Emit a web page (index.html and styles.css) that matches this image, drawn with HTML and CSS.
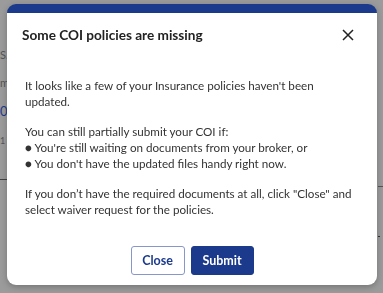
FILE: index.html
```
<html>
	<head>
		<link rel="stylesheet" href="styles.css">
	</head>
	<body>
		<div class="page">
			<div class="pageRow first">S.</div>
			<div class="pageRow">m</div>
			<div class="pageRow blue">0</div>
			<div class="pageRow small">1</div>
			<div class="pageRule"></div>
		</div>
		<div class="pageSide">
			<div class="sideRule"></div>
			<div class="sideDash"></div>
		</div>

		<div class="overlay">
			<div class="modal">
				<div class="modalHeader">
					<div class="modalTitle">Some COI policies are missing</div>
					<div class="closeIcon">
						<svg width="12" height="12" viewBox="0 0 12 12">
							<path d="M1 1 L11 11 M11 1 L1 11" stroke="#222" stroke-width="1.5" fill="none"/>
						</svg>
					</div>
				</div>
				<div class="modalBody">
					<p>It looks like a few of your Insurance policies haven't been updated.</p>
					<p>You can still partially submit your COI if:<br>
					&#9679; You're still waiting on documents from your broker, or<br>
					&#9679; You don't have the updated files handy right now.</p>
					<p>If you don’t have the required documents at all, click "Close" and select waiver request for the policies.</p>
				</div>
				<div class="modalFooter">
					<div class="btn btnOutline">Close</div>
					<div class="btn btnPrimary">Submit</div>
				</div>
			</div>
		</div>
	</body>
</html>
```

FILE: styles.css
```
html, body {
	margin: 0;
	padding: 0;
	width: 100%;
	height: 100%;
	background: #9b9b9b;
	font-family: Lato, "Noto Sans", sans-serif;
	overflow: hidden;
}

.page {
	width: 7px;
	color: #555;
	font-size: 11px;
	overflow: hidden;
}

.pageRow {
	height: 16px;
	line-height: 16px;
	margin-bottom: 12px;
}

.pageRow.first {
	margin-top: 47px;
}

.pageRow.blue {
	color: #1b3a8c;
	font-size: 13px;
}

.pageRow.small {
	margin-top: 14px;
	font-size: 9px;
}

.pageRule {
	margin-top: 30px;
	height: 1px;
	background: #444;
}

.pageSide {
	position: absolute;
	top: 0;
	right: 0;
	width: 5px;
}

.sideRule {
	margin-top: 186px;
	height: 1px;
	background: #555;
}

.sideDash {
	margin-top: 49px;
	width: 2px;
	height: 1px;
	background: #333;
}

.overlay {
	position: fixed;
	top: 0;
	left: 0;
	right: 0;
	bottom: 0;
	padding: 4px 6px 8px 7px;
	display: flex;
}

.modal {
	flex: 1;
	display: flex;
	flex-direction: column;
	background: #fff;
	border-top: 9px solid #1b3a8c;
	border-radius: 9px;
	box-shadow: 0 2px 6px rgba(0, 0, 0, 0.25);
}

.modalHeader {
	display: flex;
	align-items: center;
	justify-content: space-between;
	padding: 12px 23px 0 15px;
}

.modalTitle {
	font-size: 13.6px;
	font-weight: bold;
	color: #222;
	line-height: 20px;
}

.closeIcon {
	display: flex;
	width: 12px;
	height: 12px;
}

.modalBody {
	flex: 1;
	padding: 33px 22px 0 18px;
	font-size: 11.65px;
	line-height: 16px;
	color: #333;
}

.modalBody p {
	margin: 0 0 14px 0;
}

.modalFooter {
	display: flex;
	justify-content: center;
	gap: 6px;
	padding-bottom: 10px;
}

.btn {
	height: 29px;
	line-height: 27px;
	box-sizing: border-box;
	border-radius: 3px;
	font-size: 12.5px;
	font-weight: bold;
	text-align: center;
	user-select: none;
}

.btnOutline {
	width: 54px;
	border: 1px solid #8797c9;
	color: #1b3a8c;
	background: #fff;
}

.btnPrimary {
	width: 63px;
	border: 1px solid #1b3a8c;
	color: #fff;
	background: #1b3a8c;
}
```
